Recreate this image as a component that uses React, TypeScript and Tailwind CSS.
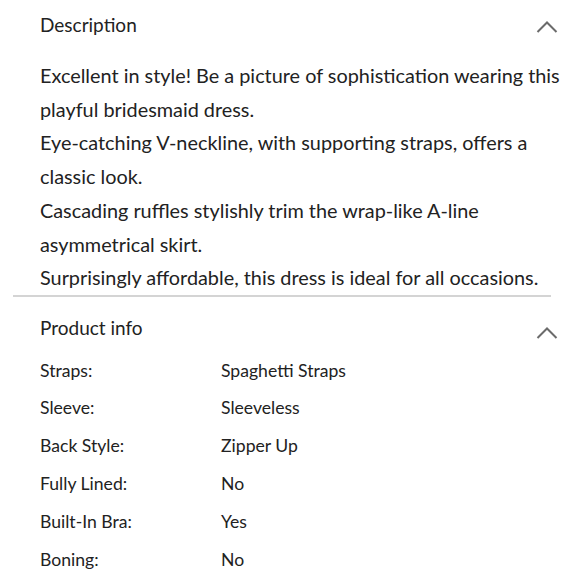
import React from 'react';

const specs: [string, string][] = [
  ['Straps:', 'Spaghetti Straps'],
  ['Sleeve:', 'Sleeveless'],
  ['Back Style:', 'Zipper Up'],
  ['Fully Lined:', 'No'],
  ['Built-In Bra:', 'Yes'],
  ['Boning:', 'No'],
];

function Chevron() {
  return (
    <svg width="22" height="12" viewBox="0 0 22 12" fill="none">
      <path d="M1.5 11 L11 1.5 L20.5 11" stroke="#6b6b6b" strokeWidth="2" />
    </svg>
  );
}

export default function App() {
  return (
    <div className="w-[580px] h-[580px] overflow-hidden bg-white text-[#222] font-['Lato',sans-serif]">
      <div className="flex items-center justify-between pl-[40px] pr-[22px] h-[50px]">
        <h2 className="text-[19px]">Description</h2>
        <div className="pt-[4px]"><Chevron /></div>
      </div>
      <div className="pl-[40px] pr-[12px] text-[19.85px] leading-[33.7px] pt-[9px]">
        <p>Excellent in style! Be a picture of sophistication wearing this playful bridesmaid dress.</p>
        <p>Eye-catching V-neckline, with supporting straps, offers a classic look.</p>
        <p>Cascading ruffles stylishly trim the wrap-like A-line asymmetrical skirt.</p>
        <p>Surprisingly affordable, this dress is ideal for all occasions.</p>
      </div>
      <div className="mx-[13px] w-[538px] border-t-2 border-[#d4d4d4]" />
      <div className="flex items-start justify-between pl-[40px] pr-[22px] h-[55px] pt-[18px]">
        <h2 className="text-[19px] leading-[26px]">Product info</h2>
        <div className="pt-[12px]"><Chevron /></div>
      </div>
      <div className="pl-[40px] text-[17.6px]">
        {specs.map(([k, v]) => (
          <div key={k} className="flex h-[37.8px] items-center">
            <span className="w-[181px]">{k}</span>
            <span>{v}</span>
          </div>
        ))}
      </div>
    </div>
  );
}
